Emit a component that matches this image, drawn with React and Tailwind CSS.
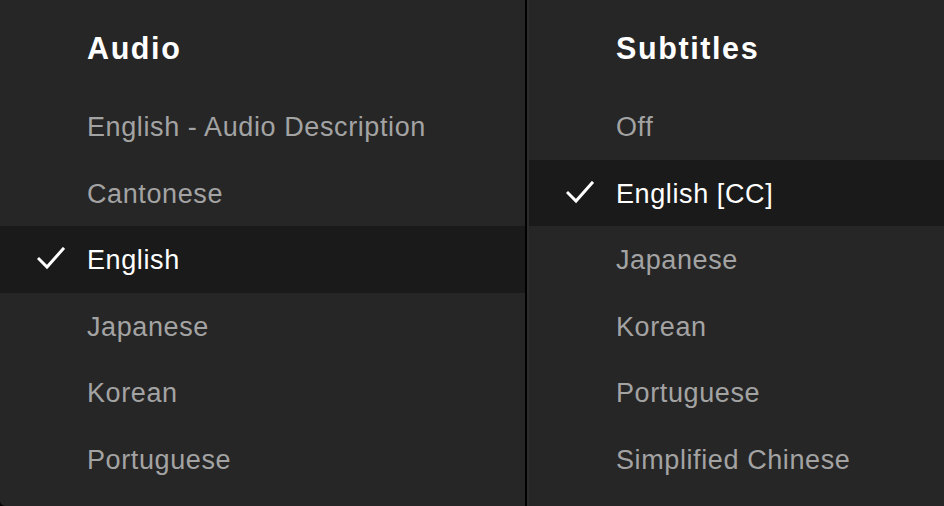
const audio = ['English - Audio Description', 'Cantonese', 'English', 'Japanese', 'Korean', 'Portuguese']
const subtitles = ['Off', 'English [CC]', 'Japanese', 'Korean', 'Portuguese', 'Simplified Chinese']

function Check() {
  return (
    <svg width="28" height="24" viewBox="0 0 28 24" className="absolute left-[37px] top-1/2 -translate-y-1/2">
      <polyline points="2,12 10,20 26,2" fill="none" stroke="white" strokeWidth="3" strokeLinecap="square" />
    </svg>
  )
}

function Column({ title, items, selected, className }) {
  return (
    <div className={`flex flex-col bg-[#262626] ${className}`}>
      <div className="h-[93px] pl-[87px] pt-[28px] text-[30.5px] font-bold leading-[40px] tracking-[1.6px] text-white">
        {title}
      </div>
      {items.map((item) => (
        <div
          key={item}
          className={`relative flex h-[66.5px] items-center pl-[87px] pt-[2px] text-[27px] tracking-[0.6px] ${
            item === selected ? 'bg-[#1a1a1a] text-white' : 'text-[#a3a3a3]'
          }`}
        >
          {item === selected && <Check />}
          {item}
        </div>
      ))}
    </div>
  )
}

export default function App() {
  return (
    <div className="flex h-[506px] w-[944px] overflow-hidden bg-black font-['Liberation_Sans',Arial,sans-serif]">
      <Column title="Audio" items={audio} selected="English" className="w-[525px] rounded-bl-[5px]" />
      <div className="w-[2px] bg-black" />
      <div className="w-[2px] bg-[#2c2c2c]" />
      <Column title="Subtitles" items={subtitles} selected="English [CC]" className="flex-1" />
    </div>
  )
}
